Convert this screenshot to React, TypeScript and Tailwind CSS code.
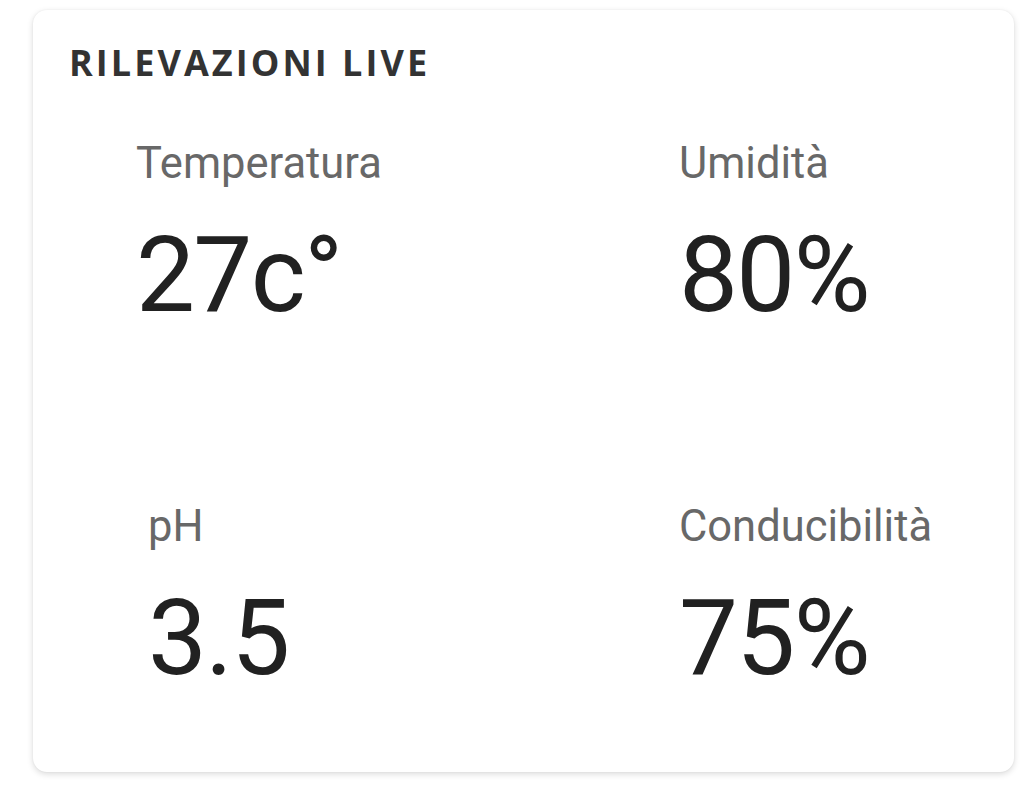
const readings = [
  { label: 'Temperatura', value: '27c°', indent: false },
  { label: 'Umidità', value: '80%', indent: false },
  { label: 'pH', value: '3.5', indent: true },
  { label: 'Conducibilità', value: '75%', indent: false },
];

function Reading({ label, value, indent }: { label: string; value: string; indent: boolean }) {
  return (
    <div className={`flex flex-col gap-[35px] ${indent ? 'pl-3' : ''}`}>
      <span className="text-[43.5px] leading-[48px] text-[#686868] font-['Roboto',sans-serif]">{label}</span>
      <span className="text-[105px] leading-[105px] tracking-[-0.016em] text-[#212121] font-['Roboto',sans-serif]">
        {value}
      </span>
    </div>
  );
}

export default function App() {
  return (
    <div className="min-h-screen bg-white pt-[10px] pl-[33px]">
      <div className="w-[981px] h-[762px] rounded-[14px] bg-white shadow-[0_2px_6px_rgba(0,0,0,0.15),0_0_2px_rgba(0,0,0,0.06)] pt-[31px] pl-[36px]">
        <h2 className="text-[36px] leading-[44px] font-bold tracking-[0.085em] text-[#333333] font-['Open_Sans',sans-serif]">
          RILEVAZIONI LIVE
        </h2>
        <div className="mt-[55px] pl-[67px] grid grid-cols-[543px_1fr] gap-y-[175px]">
          {readings.map((r) => (
            <Reading key={r.label} {...r} />
          ))}
        </div>
      </div>
    </div>
  );
}
